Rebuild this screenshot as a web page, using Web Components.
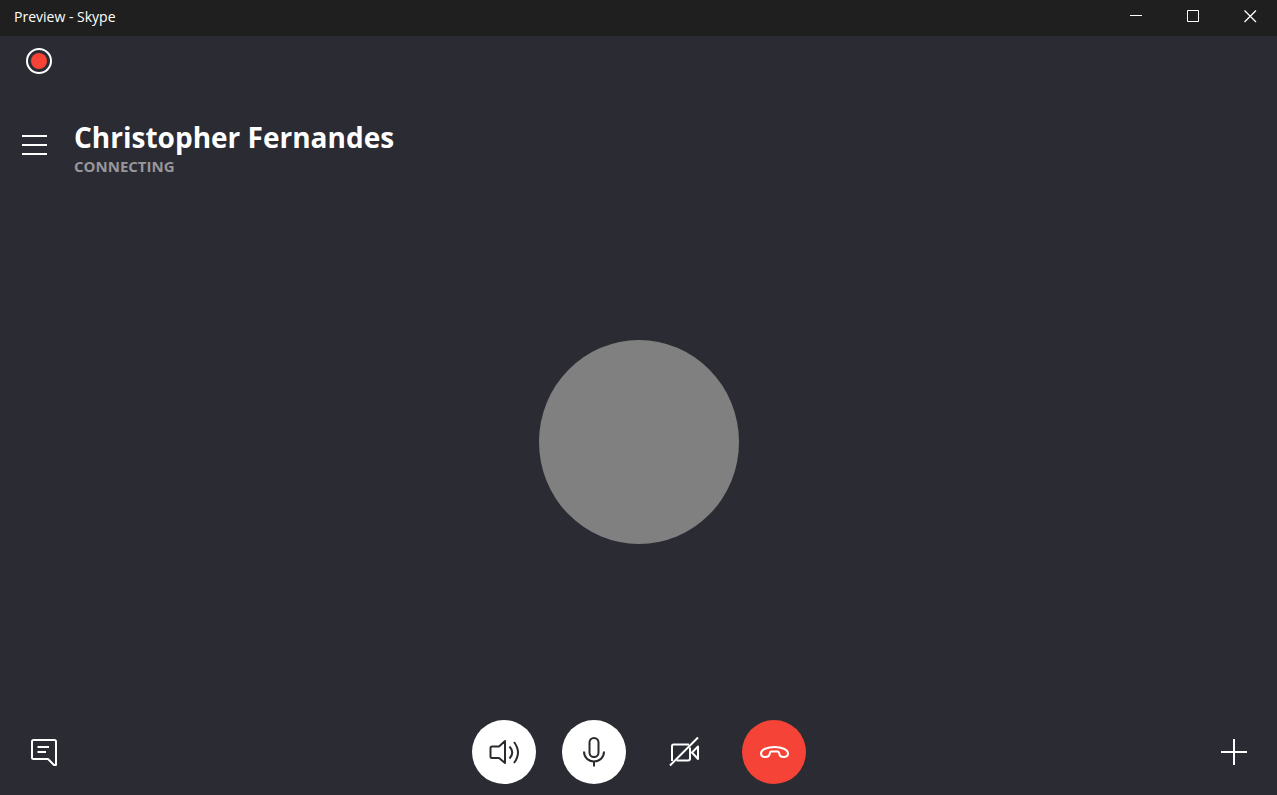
<!DOCTYPE html>
<html lang="en">
<head>
<meta charset="UTF-8">
<meta name="viewport" content="width=device-width, initial-scale=1.0">
<title>Preview - Skype</title>
<style>
    :root {
        --surface: #2b2b33;
        --titlebar: #1f1f1f;
        --danger: #f54337;
        --text-secondary: #97979b;
    }
    body {
        margin: 0;
        background: var(--surface);
        color: #fff;
        font-family: "Open Sans", "Noto Sans", sans-serif;
    }
</style>
</head>
<body>
<call-window>
    <title-bar slot="title">Preview - Skype</title-bar>
    <record-button slot="status"></record-button>
    <call-header slot="header" name="Christopher Fernandes" status="CONNECTING"></call-header>
    <call-avatar></call-avatar>
    <call-controls slot="controls">
        <call-button slot="start" label="Open chat" icon="chat"></call-button>
        <call-button variant="light" label="Speaker" icon="speaker"></call-button>
        <call-button variant="light" label="Microphone" icon="mic"></call-button>
        <call-button label="Turn on camera" icon="camera-off"></call-button>
        <call-button variant="danger" label="End call" icon="hang-up"></call-button>
        <call-button slot="end" label="Add people" icon="plus"></call-button>
    </call-controls>
</call-window>

<script>
const render = (host, html) => {
    const shadow = host.attachShadow({ mode: 'open' });
    const template = document.createElement('template');
    template.innerHTML = html;
    shadow.appendChild(template.content.cloneNode(true));
};

// All icons share a 32x32 box
const icons = {
    chat: `<path d="M5.500 4h21a1.500 1.500 0 0 1 1.500 1.500V29h-2l-6-6H5.500A1.500 1.500 0 0 1 4 21.500v-16A1.500 1.500 0 0 1 5.500 4z"/>
        <path d="M9.500 11H21M9.500 16H18"/>`,
    speaker: `<path d="M17 5v22l-6-5H4q-1.500 0-1.500-1.500v-8.500q0-1.500 1.500-1.500h7zM21.500 10.500q5.500 6 0 12M26 6q8 10.500 0 21"/>`,
    mic: `<rect x="11.500" y="2" width="9" height="19" rx="4.500"/>
        <path d="M6 15.500c0 6 4.500 10 10 10s10-4 10-10M16 25.500v5"/>`,
    'camera-off': `<path d="M21 8.500H5.500q-1.500 0-1.500 1.500v15M8.500 24.500H20q2 0 2-2V11.500M30 10.500v12.500l-6-6.500zM2 29.500l28-28"/>`,
    'hang-up': `<path d="M16.500 11C9.500 11 3 13.500 3 17.500c0 4.500 7.500 4.500 8.500 1 .5-2 .5-3 1.500-3h7c1 0 1 1 1.500 3 1 3.500 8.500 3.500 8.500-1 0-4-6.500-6.500-13.500-6.500z"/>`,
    plus: `<path d="M16 3v26M3 16h26"/>`,
};

class CallWindow extends HTMLElement {
    constructor() {
        super();
        render(this, `
            <style>
                :host {
                    display: flex;
                    flex-direction: column;
                    min-height: 100vh;
                }
                main {
                    flex: 1;
                    display: flex;
                    align-items: center;
                    justify-content: center;
                }
                .status {
                    display: flex;
                    padding: 12px 26px;
                }
            </style>
            <slot name="title"></slot>
            <div class="status"><slot name="status"></slot></div>
            <slot name="header"></slot>
            <main><slot></slot></main>
            <slot name="controls"></slot>
        `);
    }
}

class TitleBar extends HTMLElement {
    constructor() {
        super();
        render(this, `
            <style>
                :host {
                    display: flex;
                    align-items: center;
                    justify-content: space-between;
                    height: 36px;
                    background: var(--titlebar);
                    font-size: 14px;
                }
                .title {
                    padding: 0 14px 2px;
                    line-height: 32px;
                }
                .buttons {
                    display: flex;
                    gap: 4px;
                    height: 100%;
                }
                button {
                    width: 53px;
                    height: 32px;
                    padding: 0;
                    border: 0;
                    background: none;
                    color: inherit;
                    display: grid;
                    place-items: center;
                }
                button:hover {
                    background: #3a3a3a;
                }
                svg {
                    width: 13px;
                    height: 13px;
                    fill: none;
                    stroke: currentColor;
                }
                .close {
                    stroke-width: 1.3;
                }
            </style>
            <span class="title"><slot></slot></span>
            <div class="buttons">
                <button type="button" aria-label="Minimize"><svg viewBox="0 0 13 13"><path d="M0 5.500h12"/></svg></button>
                <button type="button" aria-label="Maximize"><svg viewBox="0 0 13 13"><path d="M.5.500h11v11H.5z"/></svg></button>
                <button type="button" aria-label="Close"><svg class="close" viewBox="0 0 13 13"><path d="M.5.500l11.500 11.500M12 .500l-11.500 11.500"/></svg></button>
            </div>
        `);
    }
}

class RecordButton extends HTMLElement {
    constructor() {
        super();
        render(this, `
            <style>
                :host {
                    display: block;
                }
                button {
                    display: block;
                    width: 26px;
                    height: 26px;
                    padding: 3px;
                    border: 2px solid #fff;
                    border-radius: 50%;
                    background: var(--danger) content-box;
                }
            </style>
            <button type="button" aria-label="Recording"></button>
        `);
    }
}

class CallHeader extends HTMLElement {
    constructor() {
        super();
        render(this, `
            <style>
                :host {
                    display: flex;
                    align-items: center;
                    gap: 26px;
                    padding: 32px 22px 4px;
                }
                button {
                    padding: 0;
                    border: 0;
                    background: none;
                    color: inherit;
                }
                svg {
                    display: block;
                    width: 26px;
                    height: 26px;
                    stroke: currentColor;
                    stroke-width: 2;
                }
                .menu {
                    padding-bottom: 4px;
                }
                h1 {
                    margin: 0;
                    font-size: 28px;
                    line-height: 38px;
                }
                p {
                    margin: 0;
                    color: var(--text-secondary);
                    font-size: 15px;
                    font-weight: 700;
                    line-height: 20px;
                }
            </style>
            <button class="menu" type="button" aria-label="Menu"><svg viewBox="0 0 26 26"><path d="M0 4h25M0 13h25M0 22h25"/></svg></button>
            <div>
                <h1>${this.getAttribute('name')}</h1>
                <p>${this.getAttribute('status')}</p>
            </div>
        `);
    }
}

class CallAvatar extends HTMLElement {
    constructor() {
        super();
        render(this, `
            <style>
                :host {
                    display: block;
                    width: 200px;
                    height: 204px;
                    border-radius: 50%;
                    background: #808080;
                }
            </style>
        `);
    }
}

class CallControls extends HTMLElement {
    constructor() {
        super();
        render(this, `
            <style>
                :host {
                    display: grid;
                    grid-template-columns: 1fr auto 1fr;
                    padding: 16px 11px 11px 12px;
                }
                .center {
                    display: flex;
                    gap: 26px;
                }
                .end {
                    justify-self: end;
                }
            </style>
            <div><slot name="start"></slot></div>
            <div class="center"><slot></slot></div>
            <div class="end"><slot name="end"></slot></div>
        `);
    }
}

class CallButton extends HTMLElement {
    constructor() {
        super();
        render(this, `
            <style>
                :host {
                    display: block;
                }
                button {
                    display: grid;
                    place-items: center;
                    width: 64px;
                    height: 64px;
                    padding: 0;
                    border: 0;
                    border-radius: 50%;
                    background: none;
                    color: #fff;
                    cursor: pointer;
                }
                :host([variant="light"]) button {
                    background: #fff;
                    color: #2b2b2f;
                }
                :host([variant="danger"]) button {
                    background: var(--danger);
                }
                svg {
                    width: 32px;
                    height: 32px;
                    fill: none;
                    stroke: currentColor;
                    stroke-width: 2;
                    stroke-linejoin: round;
                }
            </style>
            <button type="button" aria-label="${this.getAttribute('label')}">
                <svg viewBox="0 0 32 32">${icons[this.getAttribute('icon')]}</svg>
            </button>
        `);
    }
}

customElements.define('call-window', CallWindow);
customElements.define('title-bar', TitleBar);
customElements.define('record-button', RecordButton);
customElements.define('call-header', CallHeader);
customElements.define('call-avatar', CallAvatar);
customElements.define('call-controls', CallControls);
customElements.define('call-button', CallButton);
</script>
</body>
</html>
